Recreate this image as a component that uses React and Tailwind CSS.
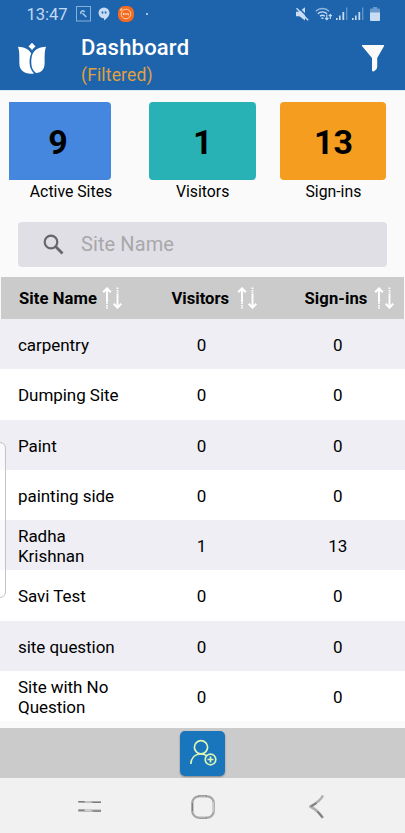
import React, { useState } from "react";

const sites = [
  { name: "carpentry", visitors: 0, signIns: 0 },
  { name: "Dumping Site", visitors: 0, signIns: 0 },
  { name: "Paint", visitors: 0, signIns: 0 },
  { name: "painting side", visitors: 0, signIns: 0 },
  { name: "Radha Krishnan", visitors: 1, signIns: 13 },
  { name: "Savi Test", visitors: 0, signIns: 0 },
  { name: "site question", visitors: 0, signIns: 0 },
  { name: "Site with No Question", visitors: 0, signIns: 0 },
];

const Signal = () => (
  <svg width="12" height="14" viewBox="0 0 12 14" fill="#c9dcf3">
    <rect x="0" y="11" width="1.6" height="2" />
    <rect x="3" y="8.5" width="1.6" height="4.5" />
    <rect x="6.4" y="5" width="1.8" height="8" />
    <rect x="10" y="0.5" width="1.4" height="12.5" opacity="0.4" />
  </svg>
);

const StatusBar = () => (
  <div className="flex h-7 items-center pl-[26.5px] text-[#c5daf3]">
    <span className="w-[49.5px] pt-[2px] text-[16.5px]">13:47</span>
    <svg width="15" height="16" viewBox="0 0 15 16" fill="none" stroke="#a9c8ea">
      <rect x="0.5" y="0.5" width="14" height="14.5" opacity="0.75" />
      <path d="M5 7.8a1.9 1.9 0 1 1 3.6-1.8M6.5 7.2l3.8 3.8" strokeWidth="1.6" />
    </svg>
    <svg className="ml-[7px]" width="12" height="14" viewBox="0 0 12 14">
      <path d="M6 .5a5.5 5.5 0 0 1 5.5 5.3c0 3.4-2.7 5.7-5.5 7.7v-2.3A5.4 5.4 0 0 1 .5 5.8 5.5 5.5 0 0 1 6 .5z" fill="#c9dcf3" />
      <path d="M3.6 4.5h1.7v1.9L4.7 7.5V6.2H3.6zM6.7 4.5h1.7v1.9L7.8 7.5V6.2H6.7z" fill="#1d64ad" />
    </svg>
    <svg className="ml-2" width="16" height="16" viewBox="0 0 16 16" fill="none">
      <rect x="0" y="0" width="16" height="16" rx="6.5" fill="#f36a20" />
      <circle cx="8" cy="8" r="4.8" stroke="#ffd0ab" strokeWidth="1" />
      <path d="M5.5 7v2M5.5 8h1.3M8 7v2M10 7v2M10 8.8h1" stroke="#ffe6d3" strokeWidth="1" />
      <path d="M2.2 4.5l2-2" stroke="#ffd0ab" strokeWidth="1.2" />
    </svg>
    <span className="ml-[12px] h-0.5 w-0.5 rounded-full bg-[#d5e4f6]"></span>
    <svg className="ml-[148px]" width="13" height="14" viewBox="0 0 13 14">
      <path d="M0 4.8h3L9 .2v13.3L3.4 9.3H0z" fill="#c9dcf3" />
      <path d="M1.5 -.5l12 12.3" stroke="#1d64ad" strokeWidth="1.5" />
      <path d="M.5 1.2l11.7 12" stroke="#c9dcf3" strokeWidth="1.5" />
    </svg>
    <svg className="ml-[6px]" width="18" height="14" viewBox="0 0 18 14" fill="none" stroke="#c9dcf3" strokeWidth="1.4">
      <path d="M.8 4.2a9.6 9.6 0 0 1 13.2 0" opacity="0.7" />
      <path d="M2.8 6.7a6.8 6.8 0 0 1 9.2 0" />
      <path d="M5 9.2a3.8 3.8 0 0 1 4.8 0" />
      <path d="M7.4 10.5v1.5" strokeWidth="2" />
      <path d="M11.8 7.5v5M10.2 11l1.6 1.6 1.6-1.6M15.3 12V7.7M13.7 9.2l1.6-1.6 1.6 1.6" strokeWidth="1.1" />
    </svg>
    <div className="ml-[3px] flex gap-[4px]">
      <Signal />
      <Signal />
    </div>
    <svg className="ml-[6px]" width="10" height="14" viewBox="0 0 10 14" fill="#c9dcf3">
      <path d="M3 0h4v1.5h2A1 1 0 0 1 10 2.5V6H0V2.5a1 1 0 0 1 1-1h2z" opacity="0.45" />
      <path d="M0 5.5h10V13a1 1 0 0 1-1 1H1a1 1 0 0 1-1-1z" />
    </svg>
  </div>
);

const Header = () => (
  <header className="h-[90px] bg-[#1d64ad]">
    <StatusBar />
    <div className="flex items-start pl-[17px]">
      <svg className="mt-[14px]" width="30" height="33" viewBox="0 0 30 33" fill="#fff">
        <path d="M15 .8l3.5 3.7c-1.5 1-2.7 2.2-3.5 3.7-.8-1.5-2-2.7-3.5-3.7z" />
        <path d="M1 4.8c6 .4 10.5 2 13.3 6.7-1.5 3-1.9 6.3-1.7 9.7.2 4 1.6 7.3 4.4 10.3-4.5.8-9-.1-12-3-3-3-2.6-7.3-2.7-11.5C2.4 12.6 2.3 8.3 1 4.8z" />
        <path d="M29 4.8c-1.3 3.5-1.4 7.8-1.4 12.2.1 4.2.3 8.2-2 11-1.6 2-4 3-6.6 3-3.2-2.3-4.6-5.7-4.7-9.9-.1-3.6.2-6.8 1.6-9.8C18.5 6.800 23 5.200 29 4.800z" />
      </svg>
      <div className="ml-[34px] mt-[7px] grow">
        <h1 className="text-[22px] font-medium leading-[26px] tracking-[0.2px] text-white">Dashboard</h1>
        <p className="text-[17.5px] leading-[29px] tracking-[0.15px] text-[#e0a040]">(Filtered)</p>
      </div>
      <svg className="mr-[20px] mt-[16px]" width="24" height="28" viewBox="0 0 24 28" fill="#fafafa">
        <path d="M1.5 1h21q1 0 .6 1l-6.9 12v8.500c0 2-1.200 3.700-3.200 4.700-1.200.5-2 0-2-1.200V14L1 2q-.4-1 .5-1z" />
      </svg>
    </div>
  </header>
);

const SortIcon = () => (
  <svg width="20" height="22" viewBox="0 0 20 22" fill="none" stroke="#fff">
    <path d="M5 2v13" strokeWidth="1.9" />
    <path d="M1.2 5.2L5 1.4l3.8 3.8" strokeWidth="2.1" />
    <path d="M5 15.5v6" strokeWidth="1.9" strokeDasharray="1.5 0.9" />
    <path d="M15.5 7v13" strokeWidth="1.9" />
    <path d="M11.7 16.8l3.8 3.8 3.8-3.8" strokeWidth="2.1" />
    <path d="M15.5 .5v6" strokeWidth="1.9" strokeDasharray="1.5 0.9" />
  </svg>
);

const App = () => {
  const [search, setSearch] = useState("");

  const rows = sites.filter((s) =>
    s.name.toLowerCase().includes(search.toLowerCase())
  );

  return (
    <div className="relative flex h-[833px] w-[405px] flex-col overflow-hidden bg-[#fafafa] font-[Roboto,sans-serif] text-black">
      <Header />

      {/* Stats */}
      <div className="flex h-[131.5px] border-t border-[#dcebf8] pl-[9px] pt-[10.5px] text-[15.8px]">
        <div className="w-[102px]">
          <div className="flex h-[78px] items-center justify-center rounded-r-[4px] bg-[#4587de] pr-1 pt-1 text-[34px] font-bold">9</div>
          <p className="w-[124px] text-center leading-[24px]">Active Sites</p>
        </div>
        <div className="ml-[38.4px] w-[106.5px]">
          <div className="flex h-[78px] items-center justify-center rounded-[4px] bg-[#28b2b5] pt-1 text-[34px] font-bold">1</div>
          <p className="text-center leading-[24px]">Visitors</p>
        </div>
        <div className="ml-[24.5px] w-[106px]">
          <div className="flex h-[78px] items-center justify-center rounded-[4px] bg-[#f59d1e] pt-1 text-[34px] font-bold">13</div>
          <p className="text-center leading-[24px]">Sign-ins</p>
        </div>
      </div>

      {/* Search */}
      <div className="mx-[18px] flex h-[45px] items-center rounded-[4px] bg-[#e0dfe6] pl-[25px]">
        <svg width="21" height="21" viewBox="0 0 21 21" fill="none" stroke="#67666b">
          <circle cx="8" cy="8" r="6.3" strokeWidth="2.2" />
          <path d="M12.3 12.3l7.2 7.2" strokeWidth="2.8" />
        </svg>
        <input
          type="text"
          placeholder="Site Name"
          value={search}
          onChange={(e) => setSearch(e.target.value)}
          className="ml-[17px] w-[280px] bg-transparent text-[20px] tracking-[0.1px] outline-none placeholder:text-[#a8a8aa]"
        />
      </div>

      {/* Table */}
      <div className="mt-[10px] ml-px mr-px flex h-[42.5px] shrink-0 items-center bg-[#cbcbcb] text-[16.6px] font-bold">
        <div className="flex w-[152px] items-center pl-[18px]">
          <span className="mr-[5px] mt-1 w-[78px] whitespace-nowrap tracking-[0.1px]">Site Name</span>
          <SortIcon />
        </div>
        <div className="flex w-[133px] items-center pl-[18.5px]">
          <span className="mr-[7.5px] mt-1 w-[58px] whitespace-nowrap">Visitors</span>
          <SortIcon />
        </div>
        <div className="flex items-center pl-[18.5px]">
          <span className="mr-[6px] mt-1 w-[63px] whitespace-nowrap tracking-[0.1px]">Sign-ins</span>
          <SortIcon />
        </div>
      </div>
      <div className="h-[402px]">
        {rows.map((s) => (
          <div key={s.name} className="flex h-[50.25px] items-center bg-white pt-[2px] text-[17px] leading-[20px] odd:bg-[#efeef4]">
            <div className="w-[134px] pl-[18px]">
              <p className="w-[106px] tracking-[-0.05px]">{s.name}</p>
            </div>
            <div className="w-[135px] text-center">{s.visitors}</div>
            <div className="w-[136px] pl-[1.5px] text-center">{s.signIns}</div>
          </div>
        ))}
      </div>

      {/* Edge panel handle */}
      <div className="absolute -left-2 top-[442px] h-[156px] w-[14px] rounded-[6px] border border-[#c4c4c8] bg-white/60"></div>

      <div className="mt-[7px] flex h-[50px] items-center justify-center bg-[#cbcbcb]">
        <button className="flex h-[45px] w-[45px] items-center justify-center rounded-[5px] bg-[#1976bd] shadow-[0_1px_2px_rgba(0,0,0,0.35)]">
          <svg width="28" height="28" viewBox="0 0 28 28" fill="none" stroke="#dcf5b4" strokeWidth="1.7">
            <circle cx="12" cy="8.3" r="6.6" />
            <path d="M1.8 25c.4-6 4-10 10.2-10 2.7 0 4.5.7 6 2" />
            <circle cx="21.5" cy="20.5" r="5.3" />
            <path d="M21.5 17.5v6M18.5 20.5h6" strokeWidth="1.7" />
          </svg>
        </button>
      </div>

      {/* Android navigation */}
      <div className="flex grow items-center bg-[#f1f1f1] pl-[78px] pt-[2px]">
        <svg width="24" height="15" viewBox="0 0 24 15" fill="none" strokeWidth="2.2">
          <path d="M.3 3h22.7M.3 11.7h22.7" stroke="#a8a8a8" />
          <path d="M.3 2.5h6M15 3.5h8M.3 11.2h6M15 12.2h8" stroke="#7c7c7c" strokeWidth="1.2" />
          <path d="M7 2.8h6M7 11.5h6" stroke="#d2d2d2" strokeWidth="1.2" />
        </svg>
        <svg className="ml-[89px]" width="24" height="24" viewBox="0 0 24 24" fill="none">
          <rect x="1.3" y="1.3" width="21.4" height="21.4" rx="6.5" stroke="#a6a6a6" strokeWidth="2.3" />
          <path d="M1.5 8v8M7 1.2h9M8 22.8h8" stroke="#7f7f7f" strokeWidth="1.2" />
          <path d="M22.2 7v10M8 2h7M8 22h7" stroke="#dadada" strokeWidth="1" />
        </svg>
        <svg className="ml-[94px]" width="16" height="26" viewBox="0 0 16 26" fill="none">
          <path d="M14 1.5C12 5.5 8 9 1.5 12.5c5.5 3 9.5 7 12.5 11.5" stroke="#b0b0b0" strokeWidth="2.6" />
          <path d="M2 12.5l5.5-3.5M8.5 17.5l5 6" stroke="#7c7c7c" strokeWidth="1.8" />
        </svg>
      </div>
    </div>
  );
};

export default App;
